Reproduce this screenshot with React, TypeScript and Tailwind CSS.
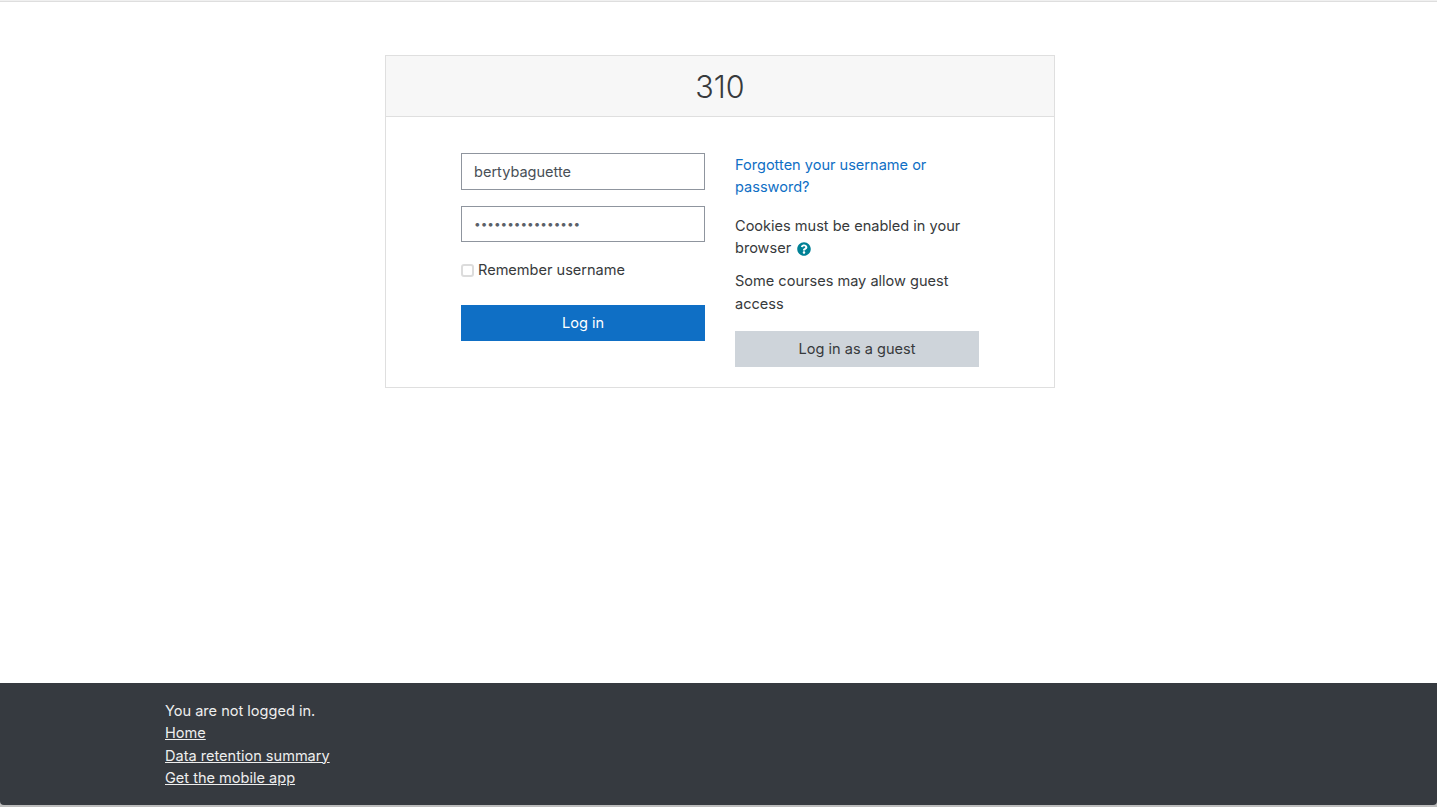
export default function App() {
    return (
        <div className="h-[807px] flex flex-col bg-white text-[14.55px] leading-[22.5px] text-[#373a3c] font-['Inter',sans-serif] overflow-hidden">
            <div className="h-[2px] shrink-0 border-b border-[#dedede] bg-[#f0f0f0]" />

            <main className="flex-1 pt-[53px]">
                <div className="w-[670px] ml-[385px] border border-[#dfdfdf] bg-white">
                    <div className="h-[61px] bg-[#f7f7f7] border-b border-[#dfdfdf] flex items-center justify-center">
                        <h2 className="text-[30.5px] leading-[36px] pt-[2px] text-[#373a3c] font-light">310</h2>
                    </div>

                    <div className="flex justify-center gap-[30px] pt-9 pb-5">
                        <form className="w-[244px] flex flex-col">
                            <input
                                type="text"
                                defaultValue="bertybaguette"
                                className="h-[37px] px-3 border border-[#8f959e] text-[#495057] outline-none"
                            />
                            <input
                                type="password"
                                defaultValue="bertybaguette123"
                                className="h-9 mt-4 pl-[12px] pr-3 border border-[#8f959e] text-[11.8px] text-[#5a6068] outline-none"
                            />
                            <label className="flex items-center gap-[4px] mt-[17px] h-[22px]">
                                <span className="w-[13px] h-[13px] bg-white border-2 border-[#dcdcdc] rounded-[3px]" />
                                Remember username
                            </label>
                            <button type="button" className="h-9 mt-[24px] bg-[#0f6fc5] text-white">
                                Log in
                            </button>
                        </form>

                        <div className="w-[244px] flex flex-col">
                            <a href="#" className="text-[#0f6fc5] mt-px leading-[22px]">Forgotten your username or password?</a>
                            <p className="mt-[17px] leading-[22px]">
                                Cookies must be enabled in your browser
                                <svg viewBox="0 0 512 512" className="inline-block w-[14px] h-[14px] ml-[6px] -mt-[1px] fill-[#008196]">
                                    <path d="M504 256c0 137-111 248-248 248S8 393 8 256C8 119 119 8 256 8s248 111 248 248zM262.7 90c-54.5 0-89.3 23-116.5 63.8-3.5 5.3-2.4 12.4 2.7 16.3l34.7 26.3c5.2 3.9 12.6 3 16.7-2.1 17.9-22.7 30.1-35.8 57.3-35.8 20.4 0 45.7 13.1 45.7 33 0 15-12.4 22.7-32.6 34-23.6 13.2-54.8 29.7-54.8 70.9V302c0 6.6 5.4 12 12 12h56c6.6 0 12-5.4 12-12v-1.3c0-28.6 83.4-29.8 83.4-107.1C379.3 135.4 318.9 90 262.7 90zM256 339c-25.4 0-46 20.6-46 46 0 25.4 20.6 46 46 46s46-20.6 46-46c0-25.4-20.6-46-46-46z" />
                                </svg>
                            </p>
                            <p className="mt-[11px]">Some courses may allow guest access</p>
                            <button type="button" className="h-9 mt-[16px] bg-[#ced4da] text-[#373a3c]">
                                Log in as a guest
                            </button>
                        </div>
                    </div>
                </div>
            </main>

            <footer className="h-[124px] shrink-0 bg-[#bdbdbd]">
                <div className="h-[122px] bg-[#363a40] rounded-b-[4px] pl-[165px] pt-[16.5px] text-[#eeeeee]">
                    <p>You are not logged in.</p>
                    <ul>
                        <li><a href="#" className="underline">Home</a></li>
                        <li><a href="#" className="underline">Data retention summary</a></li>
                        <li><a href="#" className="underline">Get the mobile app</a></li>
                    </ul>
                </div>
            </footer>
        </div>
    );
}
